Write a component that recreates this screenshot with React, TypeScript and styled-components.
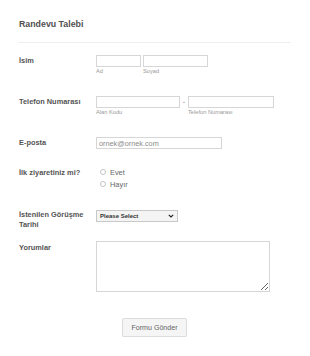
import React from "react";
import styled, { createGlobalStyle } from "styled-components";

/* ---------- global ---------- */
const Global = createGlobalStyle`
  html, body { margin: 0; padding: 0; background: #fff; }
  body { font-family: "Liberation Sans", Arial, sans-serif; }
  * { box-sizing: border-box; }
`;

/* ---------- layout ---------- */
const Page = styled.form`
  width: 310px;
  padding: 19px 19px 0 19px;
  color: #555;
`;

const Title = styled.h2`
  margin: 0;
  font-size: 8.8px;
  line-height: 11px;
  font-weight: bold;
  color: #505050;
`;

const Divider = styled.hr`
  border: 0;
  border-top: 1px solid #eee;
  margin: 12px 0 12px -1px;
`;

const Row = styled.div<{ $h: number }>`
  display: flex;
  height: ${({ $h }) => $h}px;
`;

const Label = styled.label<{ $pt?: number }>`
  width: 77px;
  flex-shrink: 0;
  padding-top: ${({ $pt }) => $pt ?? 2}px;
  font-size: 7.4px;
  line-height: 10px;
  font-weight: bold;
  color: #555555;
`;

const Field = styled.div`
  display: flex;
  flex-direction: column;
`;

const Inline = styled.div<{ $gap?: number }>`
  display: flex;
  align-items: flex-start;
  gap: ${({ $gap }) => $gap ?? 2}px;
`;

const Sub = styled.div`
  display: flex;
  flex-direction: column;
`;

const Input = styled.input<{ $w: number }>`
  width: ${({ $w }) => $w}px;
  height: 12px;
  border: 1px solid #d6d6d6;
  border-radius: 0;
  padding: 0 2px;
  font-family: inherit;
  font-size: 7.3px;
  color: #555;
  outline: none;
  &::placeholder { color: #8c8c8c; }
`;

const SubLabel = styled.span`
  margin-top: 1px;
  font-size: 5.7px;
  line-height: 7px;
  color: #999;
`;

const Dash = styled.span`
  width: 8px;
  text-align: center;
  font-size: 7px;
  line-height: 11px;
  color: #777;
`;

const RadioList = styled.div`
  display: flex;
  flex-direction: column;
  padding-left: 4px;
`;

const RadioItem = styled.label`
  display: flex;
  align-items: center;
  height: 12px;
  gap: 4px;
  font-size: 7.4px;
  color: #666;
`;

const RadioDot = styled.span`
  width: 6px;
  height: 6px;
  border-radius: 50%;
  border: 1px solid #c4c4c4;
  background: #fff;
`;

const SelectBox = styled.div`
  width: 82px;
  height: 12px;
  border: 1px solid #c8c8c8;
  background: #f4f4f4;
  display: flex;
  align-items: center;
  justify-content: space-between;
  padding: 0 3px 0 3px;
  font-size: 6px;
  font-weight: bold;
  color: #333;
`;

const TextArea = styled.textarea`
  width: 174px;
  height: 51px;
  border: 1px solid #d6d6d6;
  resize: both;
  padding: 2px;
  outline: none;
`;

const Footer = styled.div`
  display: flex;
  padding-left: 103px;
`;

const Button = styled.button`
  width: 65px;
  height: 19px;
  border: 1px solid #dcdcdc;
  border-radius: 2px;
  background: #f5f5f5;
  font-family: inherit;
  font-size: 7.1px;
  color: #666;
  box-shadow: 0 1px 1px rgba(0, 0, 0, 0.06);
  padding: 0;
`;

const Chevron = () => (
  <svg width="6" height="4" viewBox="0 0 6 4">
    <path d="M0.8 0.8 L3 3 L5.2 0.8" fill="none" stroke="#222" strokeWidth="1.1" />
  </svg>
);

export default function App() {
  return (
    <>
      <Global />
      <Page onSubmit={e => e.preventDefault()}>
        <Title>Randevu Talebi</Title>
        <Divider />

        <Row $h={41}>
          <Label $pt={1}>İsim</Label>
          <Inline>
            <Sub>
              <Input $w={45} />
              <SubLabel>Ad</SubLabel>
            </Sub>
            <Sub>
              <Input $w={65} />
              <SubLabel>Soyad</SubLabel>
            </Sub>
          </Inline>
        </Row>

        <Row $h={41}>
          <Label $pt={1}>Telefon Numarası</Label>
          <Inline $gap={0}>
            <Sub>
              <Input $w={84} />
              <SubLabel>Alan Kodu</SubLabel>
            </Sub>
            <Dash>-</Dash>
            <Sub>
              <Input $w={86} />
              <SubLabel>Telefon Numarası</SubLabel>
            </Sub>
          </Inline>
        </Row>

        <Row $h={29}>
          <Label $pt={1}>E-posta</Label>
          <Field>
            <Input $w={126} placeholder="ornek@ornek.com" />
          </Field>
        </Row>

        <Row $h={44}>
          <Label $pt={2}>İlk ziyaretiniz mi?</Label>
          <RadioList>
            <RadioItem><RadioDot />Evet</RadioItem>
            <RadioItem><RadioDot />Hayır</RadioItem>
          </RadioList>
        </Row>

        <Row $h={31}>
          <Label $pt={0}>İstenilen Görüşme Tarihi</Label>
          <Field>
            <SelectBox>
              Please Select
              <Chevron />
            </SelectBox>
          </Field>
        </Row>

        <Row $h={77}>
          <Label $pt={2}>Yorumlar</Label>
          <Field>
            <TextArea />
          </Field>
        </Row>

        <Footer>
          <Button type="submit">Formu Gönder</Button>
        </Footer>
      </Page>
    </>
  );
}
